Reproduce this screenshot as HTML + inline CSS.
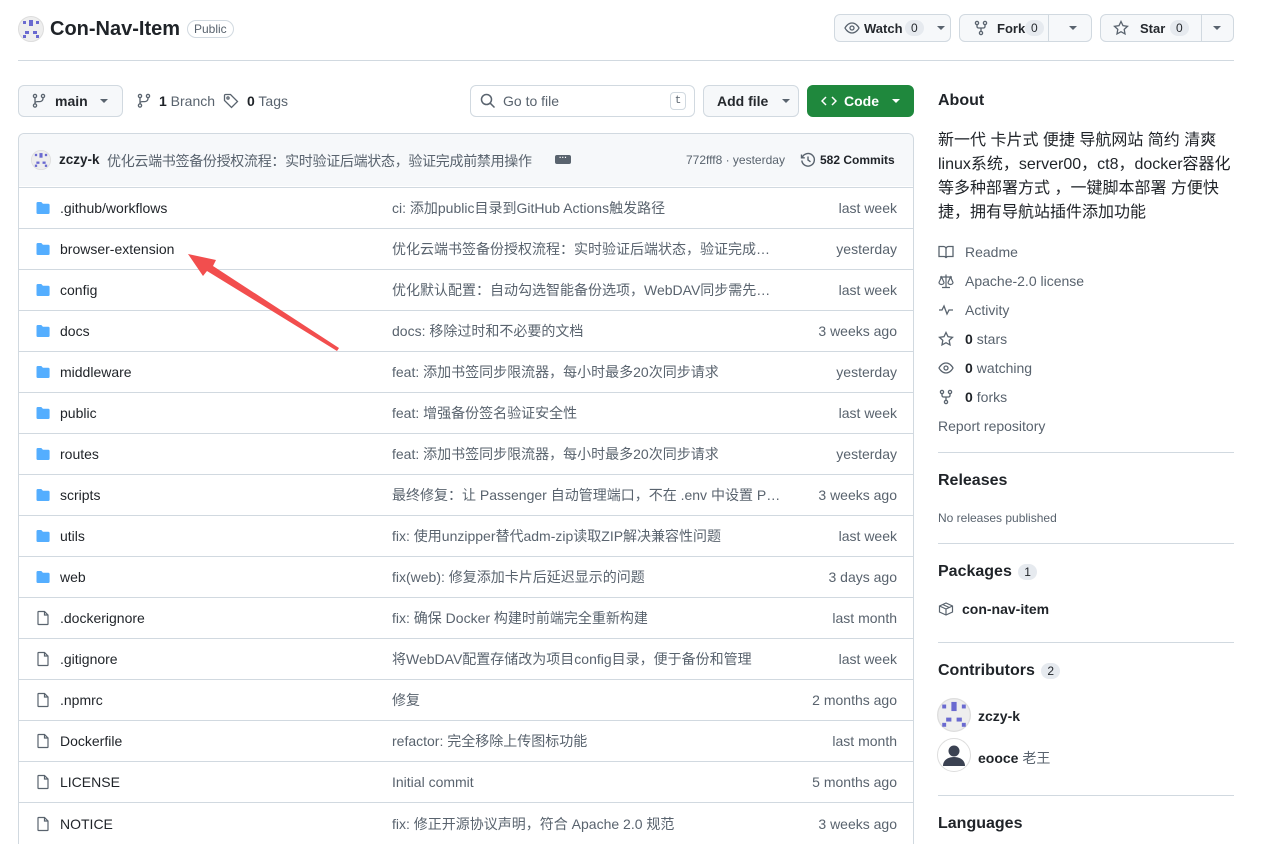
<!DOCTYPE html>
<html style="height:844px;overflow:hidden"><head><meta charset="utf-8"><style>
*{box-sizing:border-box;margin:0;padding:0}
body{width:1266px;height:844px;overflow:hidden;background:#fff;font-family:"Liberation Sans","Noto Sans CJK SC",sans-serif;color:#1f2328;font-size:14px;position:relative}
.abs{position:absolute}
.btn{position:absolute;border:1px solid #d1d9e0;border-radius:6px;background:#f6f8fa;display:flex;align-items:center;font-size:13px;font-weight:600;color:#25292e}
.btn>*{position:absolute}
.cnt{background:#e6eaef;border-radius:10px;padding:1px 6px;font-size:12px;font-weight:400}
.caret{width:0;height:0;border-left:4px solid transparent;border-right:4px solid transparent;border-top:4px solid #59636e}
.row{position:absolute;left:18px;width:896px;height:41px;border-top:1px solid #d1d9e0;display:flex;align-items:center}
.row .n{position:absolute;left:42px;font-size:14px;color:#1f2328}
.row .m{position:absolute;left:374px;font-size:14px;color:#59636e;width:390px;white-space:nowrap;overflow:hidden;text-overflow:ellipsis}
.row .t{position:absolute;right:17px;font-size:14px;color:#59636e}
.row svg{position:absolute;left:17px}
.side{position:absolute;left:938px;color:#59636e;font-size:14px;display:flex;align-items:center}
.side svg{margin-right:11px}
.h{position:absolute;left:938px;font-size:16px;font-weight:600;color:#1f2328}
.hr{position:absolute;left:938px;width:296px;height:1px;background:#d1d9e0}
</style></head><body>
<!-- header -->
<svg class="abs" style="left:18px;top:16px" width="26" height="26" viewBox="0 0 26 26"><circle cx="13" cy="13" r="12.5" fill="#eee" stroke="#ddd"/><rect x="11" y="4" width="4" height="6" fill="#6a6ad0"/><rect x="5" y="5" width="3" height="3" fill="#6a6ad0"/><rect x="18" y="5" width="3" height="3" fill="#6a6ad0"/><rect x="7" y="15" width="4" height="3" fill="#6a6ad0"/><rect x="15" y="15" width="4" height="3" fill="#6a6ad0"/><rect x="5" y="19" width="3" height="3" fill="#6a6ad0"/><rect x="18" y="19" width="3" height="3" fill="#6a6ad0"/></svg>
<div class="abs" style="left:50px;top:18px;font-size:20px;font-weight:600">Con-Nav-Item</div>
<div class="abs" style="left:187px;top:20px;border:1px solid #d1d9e0;border-radius:12px;font-size:12px;color:#59636e;padding:1px 6px">Public</div>
<div class="btn" style="left:834px;top:14px;width:117px;height:28px"><svg style="left:9px;top:5px" width="16" height="16" viewBox="0 0 16 16" fill="none" stroke="#59636e" stroke-width="1.3"><path d="M1 8s2.5-5 7-5 7 5 7 5-2.5 5-7 5-7-5-7-5z"/><circle cx="8" cy="8" r="2"/></svg><span style="left:29px;top:6px">Watch</span><span class="cnt" style="left:70px;top:5px">0</span><span class="caret" style="left:102px;top:11px"></span></div>
<div class="btn" style="left:959px;top:14px;width:133px;height:28px"><svg style="left:14px;top:5px" width="14" height="16" viewBox="0 0 14 16" fill="none" stroke="#59636e" stroke-width="1.3"><circle cx="3" cy="3" r="1.6"/><circle cx="11" cy="3" r="1.6"/><circle cx="7" cy="13" r="1.6"/><path d="M3 5v1.5a1.5 1.5 0 001.5 1.5h5A1.5 1.5 0 0011 6.5V5M7 8v3"/></svg><span style="left:37px;top:6px">Fork</span><span class="cnt" style="left:65px;top:5px">0</span><span style="left:88px;top:0;bottom:0;border-left:1px solid #d1d9e0"></span><span class="caret" style="left:109px;top:11px"></span></div>
<div class="btn" style="left:1100px;top:14px;width:134px;height:28px"><svg style="left:12px;top:5px" width="16" height="16" viewBox="0 0 16 16" fill="none" stroke="#59636e" stroke-width="1.3"><path d="M8 1.5l2 4.2 4.5.6-3.3 3.1.8 4.5L8 11.7l-4 2.2.8-4.5L1.5 6.3 6 5.7z"/></svg><span style="left:39px;top:6px">Star</span><span class="cnt" style="left:69px;top:5px">0</span><span style="left:100px;top:0;bottom:0;border-left:1px solid #d1d9e0"></span><span class="caret" style="left:112px;top:11px"></span></div>
<div class="abs" style="left:18px;top:60px;width:1216px;height:1px;background:#d1d9e0"></div>
<!-- toolbar -->
<div class="btn" style="left:18px;top:85px;width:105px;height:32px"><svg style="left:13px;top:7px" width="14" height="16" viewBox="0 0 14 16" fill="none" stroke="#59636e" stroke-width="1.3"><circle cx="3" cy="12.5" r="1.6"/><circle cx="3" cy="3" r="1.6"/><circle cx="11" cy="3" r="1.6"/><path d="M3 4.6v6.3M11 4.6v1a3 3 0 01-3 3H5a2 2 0 00-2 2"/></svg><span style="left:36px;top:7px;font-size:14px">main</span><span class="caret" style="left:81px;top:13px"></span></div>
<svg class="abs" style="left:137px;top:93px" width="14" height="16" viewBox="0 0 14 16" fill="none" stroke="#59636e" stroke-width="1.3"><circle cx="3" cy="12.5" r="1.6"/><circle cx="3" cy="3" r="1.6"/><circle cx="11" cy="3" r="1.6"/><path d="M3 4.6v6.3M11 4.6v1a3 3 0 01-3 3H5a2 2 0 00-2 2"/></svg>
<div class="abs" style="left:159px;top:93px;color:#59636e"><b style="color:#1f2328">1</b> Branch</div>
<svg class="abs" style="left:223px;top:93px" width="16" height="16" viewBox="0 0 16 16" fill="none" stroke="#59636e" stroke-width="1.3"><path d="M1.5 2.5v5l7 7 6-6-7-7h-5a1 1 0 00-1 1z"/><circle cx="5" cy="5" r="1.1"/></svg>
<div class="abs" style="left:247px;top:93px;color:#59636e"><b style="color:#1f2328">0</b> Tags</div>
<div class="abs" style="left:470px;top:85px;width:225px;height:32px;border:1px solid #d1d9e0;border-radius:6px"></div>
<svg class="abs" style="left:480px;top:93px" width="16" height="16" viewBox="0 0 16 16" fill="none" stroke="#59636e" stroke-width="1.5"><circle cx="6.5" cy="6.5" r="5"/><path d="M10.2 10.2L14.5 14.5"/></svg>
<div class="abs" style="left:503px;top:93px;color:#59636e">Go to file</div>
<div class="abs" style="left:670px;top:92px;width:16px;height:18px;border:1px solid #d1d9e0;border-radius:4px;font-family:'Liberation Mono',monospace;font-size:11px;text-align:center;line-height:16px;color:#59636e">t</div>
<div class="btn" style="left:703px;top:85px;width:96px;height:32px"><span style="left:13px;top:7px;font-size:14px">Add file</span><span class="caret" style="left:78px;top:13px"></span></div>
<div class="btn" style="left:807px;top:85px;width:107px;height:32px;background:#1f883d;border-color:#1f883d;color:#fff"><svg style="left:13px;top:7px" width="16" height="16" viewBox="0 0 16 16" fill="none" stroke="#fff" stroke-width="1.5"><path d="M5 4L1 8l4 4M11 4l4 4-4 4"/></svg><span style="left:36px;top:7px;font-size:14px">Code</span><span class="caret" style="left:84px;top:13px;border-top-color:#fff"></span></div>
<!-- table -->
<div class="abs" style="left:18px;top:133px;width:896px;height:713px;border:1px solid #d1d9e0;border-bottom:none;border-radius:6px 6px 0 0"></div>
<div class="abs" style="left:19px;top:134px;width:894px;height:52px;background:#f6f8fa;border-radius:6px 6px 0 0"></div>
<svg class="abs" style="left:31px;top:150px" width="20" height="20" viewBox="0 0 26 26"><circle cx="13" cy="13" r="12.5" fill="#eee" stroke="#ddd"/><rect x="11" y="4" width="4" height="6" fill="#6a6ad0"/><rect x="5" y="5" width="3" height="3" fill="#6a6ad0"/><rect x="18" y="5" width="3" height="3" fill="#6a6ad0"/><rect x="7" y="15" width="4" height="3" fill="#6a6ad0"/><rect x="15" y="15" width="4" height="3" fill="#6a6ad0"/><rect x="5" y="19" width="3" height="3" fill="#6a6ad0"/><rect x="18" y="19" width="3" height="3" fill="#6a6ad0"/></svg>
<div class="abs" style="left:59px;top:152px;font-size:13.5px;font-weight:600">zczy-k</div>
<div class="abs" style="left:107px;top:151px;font-size:14px;color:#59636e;letter-spacing:-0.3px">优化云端书签备份授权流程：实时验证后端状态，验证完成前禁用操作</div>
<div class="abs" style="left:555px;top:155px;width:16px;height:9px;background:#59636e;border-radius:2px;color:#fff;font-size:8px;line-height:5px;text-align:center;font-weight:bold">···</div>
<div class="abs" style="left:686px;top:153px;font-size:12px;color:#59636e">772fff8 · yesterday</div>
<svg class="abs" style="left:800px;top:152px" width="16" height="16" viewBox="0 0 16 16" fill="none" stroke="#59636e" stroke-width="1.4"><path d="M2.2 5.5A6.3 6.3 0 111.8 8.5"/><path d="M1.5 2.5v3.3h3.3M8 4.5V8l2.5 1.8"/></svg>
<div class="abs" style="left:820px;top:153px;font-size:12px;font-weight:600">582 Commits</div>

<div class="row" style="top:187px"><svg width="16" height="16" viewBox="0 0 16 16"><path d="M1.5 3.2c0-.6.5-1.2 1.2-1.2h3.6l1.6 1.8h5.5c.7 0 1.2.5 1.2 1.2v7.8c0 .7-.5 1.2-1.2 1.2H2.7c-.7 0-1.2-.5-1.2-1.2z" fill="#54aeff"/></svg><span class="n">.github/workflows</span><span class="m">ci: 添加public目录到GitHub Actions触发路径</span><span class="t">last week</span></div>
<div class="row" style="top:228px"><svg width="16" height="16" viewBox="0 0 16 16"><path d="M1.5 3.2c0-.6.5-1.2 1.2-1.2h3.6l1.6 1.8h5.5c.7 0 1.2.5 1.2 1.2v7.8c0 .7-.5 1.2-1.2 1.2H2.7c-.7 0-1.2-.5-1.2-1.2z" fill="#54aeff"/></svg><span class="n">browser-extension</span><span class="m">优化云端书签备份授权流程：实时验证后端状态，验证完成前禁用操作</span><span class="t">yesterday</span></div>
<div class="row" style="top:269px"><svg width="16" height="16" viewBox="0 0 16 16"><path d="M1.5 3.2c0-.6.5-1.2 1.2-1.2h3.6l1.6 1.8h5.5c.7 0 1.2.5 1.2 1.2v7.8c0 .7-.5 1.2-1.2 1.2H2.7c-.7 0-1.2-.5-1.2-1.2z" fill="#54aeff"/></svg><span class="n">config</span><span class="m">优化默认配置：自动勾选智能备份选项，WebDAV同步需先配置</span><span class="t">last week</span></div>
<div class="row" style="top:310px"><svg width="16" height="16" viewBox="0 0 16 16"><path d="M1.5 3.2c0-.6.5-1.2 1.2-1.2h3.6l1.6 1.8h5.5c.7 0 1.2.5 1.2 1.2v7.8c0 .7-.5 1.2-1.2 1.2H2.7c-.7 0-1.2-.5-1.2-1.2z" fill="#54aeff"/></svg><span class="n">docs</span><span class="m">docs: 移除过时和不必要的文档</span><span class="t">3 weeks ago</span></div>
<div class="row" style="top:351px"><svg width="16" height="16" viewBox="0 0 16 16"><path d="M1.5 3.2c0-.6.5-1.2 1.2-1.2h3.6l1.6 1.8h5.5c.7 0 1.2.5 1.2 1.2v7.8c0 .7-.5 1.2-1.2 1.2H2.7c-.7 0-1.2-.5-1.2-1.2z" fill="#54aeff"/></svg><span class="n">middleware</span><span class="m">feat: 添加书签同步限流器，每小时最多20次同步请求</span><span class="t">yesterday</span></div>
<div class="row" style="top:392px"><svg width="16" height="16" viewBox="0 0 16 16"><path d="M1.5 3.2c0-.6.5-1.2 1.2-1.2h3.6l1.6 1.8h5.5c.7 0 1.2.5 1.2 1.2v7.8c0 .7-.5 1.2-1.2 1.2H2.7c-.7 0-1.2-.5-1.2-1.2z" fill="#54aeff"/></svg><span class="n">public</span><span class="m">feat: 增强备份签名验证安全性</span><span class="t">last week</span></div>
<div class="row" style="top:433px"><svg width="16" height="16" viewBox="0 0 16 16"><path d="M1.5 3.2c0-.6.5-1.2 1.2-1.2h3.6l1.6 1.8h5.5c.7 0 1.2.5 1.2 1.2v7.8c0 .7-.5 1.2-1.2 1.2H2.7c-.7 0-1.2-.5-1.2-1.2z" fill="#54aeff"/></svg><span class="n">routes</span><span class="m">feat: 添加书签同步限流器，每小时最多20次同步请求</span><span class="t">yesterday</span></div>
<div class="row" style="top:474px"><svg width="16" height="16" viewBox="0 0 16 16"><path d="M1.5 3.2c0-.6.5-1.2 1.2-1.2h3.6l1.6 1.8h5.5c.7 0 1.2.5 1.2 1.2v7.8c0 .7-.5 1.2-1.2 1.2H2.7c-.7 0-1.2-.5-1.2-1.2z" fill="#54aeff"/></svg><span class="n">scripts</span><span class="m">最终修复：让 Passenger 自动管理端口，不在 .env 中设置 PORT</span><span class="t">3 weeks ago</span></div>
<div class="row" style="top:515px"><svg width="16" height="16" viewBox="0 0 16 16"><path d="M1.5 3.2c0-.6.5-1.2 1.2-1.2h3.6l1.6 1.8h5.5c.7 0 1.2.5 1.2 1.2v7.8c0 .7-.5 1.2-1.2 1.2H2.7c-.7 0-1.2-.5-1.2-1.2z" fill="#54aeff"/></svg><span class="n">utils</span><span class="m">fix: 使用unzipper替代adm-zip读取ZIP解决兼容性问题</span><span class="t">last week</span></div>
<div class="row" style="top:556px"><svg width="16" height="16" viewBox="0 0 16 16"><path d="M1.5 3.2c0-.6.5-1.2 1.2-1.2h3.6l1.6 1.8h5.5c.7 0 1.2.5 1.2 1.2v7.8c0 .7-.5 1.2-1.2 1.2H2.7c-.7 0-1.2-.5-1.2-1.2z" fill="#54aeff"/></svg><span class="n">web</span><span class="m">fix(web): 修复添加卡片后延迟显示的问题</span><span class="t">3 days ago</span></div>
<div class="row" style="top:597px"><svg width="16" height="16" viewBox="0 0 16 16" fill="none" stroke="#59636e" stroke-width="1.2"><path d="M3.5 1.5h6l3.5 3.5v9a.5.5 0 01-.5.5h-9a.5.5 0 01-.5-.5v-12a.5.5 0 01.5-.5zM9.5 1.5V5H13"/></svg><span class="n">.dockerignore</span><span class="m">fix: 确保 Docker 构建时前端完全重新构建</span><span class="t">last month</span></div>
<div class="row" style="top:638px"><svg width="16" height="16" viewBox="0 0 16 16" fill="none" stroke="#59636e" stroke-width="1.2"><path d="M3.5 1.5h6l3.5 3.5v9a.5.5 0 01-.5.5h-9a.5.5 0 01-.5-.5v-12a.5.5 0 01.5-.5zM9.5 1.5V5H13"/></svg><span class="n">.gitignore</span><span class="m">将WebDAV配置存储改为项目config目录，便于备份和管理</span><span class="t">last week</span></div>
<div class="row" style="top:679px"><svg width="16" height="16" viewBox="0 0 16 16" fill="none" stroke="#59636e" stroke-width="1.2"><path d="M3.5 1.5h6l3.5 3.5v9a.5.5 0 01-.5.5h-9a.5.5 0 01-.5-.5v-12a.5.5 0 01.5-.5zM9.5 1.5V5H13"/></svg><span class="n">.npmrc</span><span class="m">修复</span><span class="t">2 months ago</span></div>
<div class="row" style="top:720px"><svg width="16" height="16" viewBox="0 0 16 16" fill="none" stroke="#59636e" stroke-width="1.2"><path d="M3.5 1.5h6l3.5 3.5v9a.5.5 0 01-.5.5h-9a.5.5 0 01-.5-.5v-12a.5.5 0 01.5-.5zM9.5 1.5V5H13"/></svg><span class="n">Dockerfile</span><span class="m">refactor: 完全移除上传图标功能</span><span class="t">last month</span></div>
<div class="row" style="top:761px"><svg width="16" height="16" viewBox="0 0 16 16" fill="none" stroke="#59636e" stroke-width="1.2"><path d="M3.5 1.5h6l3.5 3.5v9a.5.5 0 01-.5.5h-9a.5.5 0 01-.5-.5v-12a.5.5 0 01.5-.5zM9.5 1.5V5H13"/></svg><span class="n">LICENSE</span><span class="m">Initial commit</span><span class="t">5 months ago</span></div>
<div class="row" style="top:802px;height:42px"><svg width="16" height="16" viewBox="0 0 16 16" fill="none" stroke="#59636e" stroke-width="1.2"><path d="M3.5 1.5h6l3.5 3.5v9a.5.5 0 01-.5.5h-9a.5.5 0 01-.5-.5v-12a.5.5 0 01.5-.5zM9.5 1.5V5H13"/></svg><span class="n">NOTICE</span><span class="m">fix: 修正开源协议声明，符合 Apache 2.0 规范</span><span class="t">3 weeks ago</span></div>

<!-- arrow -->
<svg class="abs" style="left:0;top:0" width="1266" height="844"><path d="M339 348 L213 266 L216 260 L188 254 L203 276 L207 271 L337 351 Z" fill="#f24e4e"/></svg>

<!-- sidebar -->
<div class="h" style="top:92px">About</div>
<div class="abs" style="left:938px;top:129px;width:300px;font-size:16px;line-height:24px;color:#1f2328">新一代 卡片式 便捷 导航网站 简约 清爽 linux系统，server00，ct8，docker容器化等多种部署方式 ，一键脚本部署 方便快捷，拥有导航站插件添加功能</div>
<div class="side" style="top:244px"><svg width="16" height="16" viewBox="0 0 16 16" fill="none" stroke="#59636e" stroke-width="1.3"><path d="M1 2.5h4.5A2.5 2.5 0 018 5v9a2 2 0 00-2-1.5H1zM15 2.5h-4.5A2.5 2.5 0 008 5v9a2 2 0 012-1.5h5z"/></svg>Readme</div>
<div class="side" style="top:273px"><svg width="16" height="16" viewBox="0 0 16 16" fill="none" stroke="#59636e" stroke-width="1.2"><path d="M8 1.5v13M4 14.5h8M2 4h12M3.5 4L1 9.5a2.5 2 0 005 0zM12.5 4L10 9.5a2.5 2 0 005 0z"/></svg>Apache-2.0 license</div>
<div class="side" style="top:302px"><svg width="16" height="16" viewBox="0 0 16 16" fill="none" stroke="#59636e" stroke-width="1.3"><path d="M1 8h3l2-4 3 8 2-4h4"/></svg>Activity</div>
<div class="side" style="top:331px"><svg width="16" height="16" viewBox="0 0 16 16" fill="none" stroke="#59636e" stroke-width="1.3"><path d="M8 1.5l2 4.2 4.5.6-3.3 3.1.8 4.5L8 11.7l-4 2.2.8-4.5L1.5 6.3 6 5.7z"/></svg><b style="color:#1f2328;margin-right:4px">0</b>stars</div>
<div class="side" style="top:360px"><svg width="16" height="16" viewBox="0 0 16 16" fill="none" stroke="#59636e" stroke-width="1.3"><path d="M1 8s2.5-5 7-5 7 5 7 5-2.5 5-7 5-7-5-7-5z"/><circle cx="8" cy="8" r="2"/></svg><b style="color:#1f2328;margin-right:4px">0</b>watching</div>
<div class="side" style="top:389px"><svg width="16" height="16" viewBox="0 0 14 16" fill="none" stroke="#59636e" stroke-width="1.3"><circle cx="3" cy="3" r="1.6"/><circle cx="11" cy="3" r="1.6"/><circle cx="7" cy="13" r="1.6"/><path d="M3 5v1.5a1.5 1.5 0 001.5 1.5h5A1.5 1.5 0 0011 6.5V5M7 8v3"/></svg><b style="color:#1f2328;margin-right:4px">0</b>forks</div>
<div class="side" style="top:418px">Report repository</div>
<div class="hr" style="top:452px"></div>
<div class="h" style="top:472px">Releases</div>
<div class="abs" style="left:938px;top:511px;font-size:12px;color:#59636e">No releases published</div>
<div class="hr" style="top:543px"></div>
<div class="h" style="top:563px">Packages <span class="cnt" style="font-weight:400;font-size:12px;margin-left:2px">1</span></div>
<svg class="abs" style="left:938px;top:601px" width="16" height="16" viewBox="0 0 16 16" fill="none" stroke="#59636e" stroke-width="1.2"><path d="M1.5 5L8 2l6.5 3v6L8 14l-6.5-3zM1.5 5L8 8l6.5-3M8 8v6M4.7 3.5l6.5 3"/></svg>
<div class="abs" style="left:962px;top:601px;font-weight:600">con-nav-item</div>
<div class="hr" style="top:642px"></div>
<div class="h" style="top:662px">Contributors <span class="cnt" style="font-weight:400;font-size:12px;margin-left:2px">2</span></div>
<svg class="abs" style="left:937px;top:698px" width="34" height="34" viewBox="0 0 26 26"><circle cx="13" cy="13" r="12.5" fill="#eee" stroke="#ddd"/><rect x="11" y="3" width="4" height="7" fill="#6a6ad0"/><rect x="4" y="5" width="3" height="3" fill="#6a6ad0"/><rect x="19" y="5" width="3" height="3" fill="#6a6ad0"/><rect x="7" y="15" width="4" height="3" fill="#6a6ad0"/><rect x="15" y="15" width="4" height="3" fill="#6a6ad0"/><rect x="4" y="19" width="3" height="3" fill="#6a6ad0"/><rect x="19" y="19" width="3" height="3" fill="#6a6ad0"/></svg>
<div class="abs" style="left:978px;top:708px;font-weight:600">zczy-k</div>
<svg class="abs" style="left:937px;top:738px" width="34" height="34" viewBox="0 0 34 34"><circle cx="17" cy="17" r="16.5" fill="#fff" stroke="#ddd"/><circle cx="17" cy="13" r="5.5" fill="#3b4252"/><path d="M6 28c0-6 5-9 11-9s11 3 11 9z" fill="#3b4252"/></svg>
<div class="abs" style="left:978px;top:748px"><b>eooce</b> <span style="color:#59636e">老王</span></div>
<div class="hr" style="top:795px"></div>
<div class="h" style="top:815px">Languages</div>
</body></html>
